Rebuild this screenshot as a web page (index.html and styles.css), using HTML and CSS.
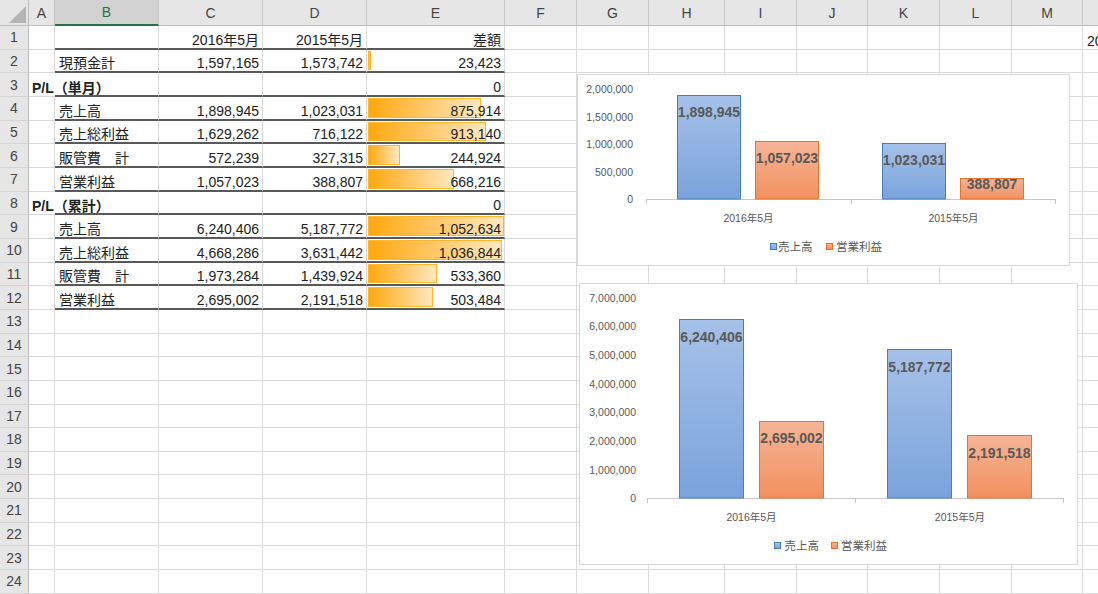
FILE: index.html
```html
<!DOCTYPE html>
<html lang="ja">
<head>
  <meta charset="UTF-8" />
  <title>P/L 比較</title>
  <link rel="stylesheet" href="styles.css">
</head>
<body>
  <div class="folha">
    <div class="planilha" id="planilha"></div>

    <!-- gráfico do mês -->
    <svg class="grafico g1" width="493" height="192" viewBox="0 0 493 192">
      <defs>
        <linearGradient id="azul" x1="0" y1="0" x2="0" y2="1">
          <stop offset="0" stop-color="#a6c1e8" />
          <stop offset="1" stop-color="#7aa3dc" />
        </linearGradient>
        <linearGradient id="laranja" x1="0" y1="0" x2="0" y2="1">
          <stop offset="0" stop-color="#f6b597" />
          <stop offset="1" stop-color="#f2905e" />
        </linearGradient>
      </defs>
      <rect class="moldura" x=".5" y=".5" width="492" height="191" />
      <g class="eixo-y">
        <text x="56" y="19">2,000,000</text>
        <text x="56" y="46.5">1,500,000</text>
        <text x="56" y="74">1,000,000</text>
        <text x="56" y="101.5">500,000</text>
        <text x="56" y="129">0</text>
      </g>
      <path class="eixo" d="M69 125.5H479M69.5 125v5M274.5 125v5M478.5 125v5" />
      <rect class="b-azul" x="100.5" y="21.5" width="63" height="103.5" />
      <rect class="b-laranja" x="178.5" y="67.5" width="63" height="57.5" />
      <rect class="b-azul" x="305.5" y="69.5" width="63" height="55.5" />
      <rect class="b-laranja" x="383.5" y="104.5" width="63" height="20.5" />
      <g class="rotulo">
        <text x="132" y="42.7">1,898,945</text>
        <text x="210" y="88.7">1,057,023</text>
        <text x="337" y="91">1,023,031</text>
        <text x="415" y="115.3">388,807</text>
      </g>
      <g class="categoria">
        <text x="171.5" y="147.5">2016年5月</text>
        <text x="376.5" y="147.5">2015年5月</text>
      </g>
      <g class="legenda">
        <rect class="b-azul" x="193.5" y="169.5" width="6" height="6" />
        <text x="201" y="176.8">売上高</text>
        <rect class="b-laranja" x="249.5" y="169.5" width="6" height="6" />
        <text x="259" y="176.8">営業利益</text>
      </g>
    </svg>

    <!-- gráfico acumulado -->
    <svg class="grafico g2" width="499" height="282" viewBox="0 0 499 282">
      <rect class="moldura" x=".5" y=".5" width="498" height="281" />
      <g class="eixo-y">
        <text x="57" y="18.6">7,000,000</text>
        <text x="57" y="47.3">6,000,000</text>
        <text x="57" y="76">5,000,000</text>
        <text x="57" y="104.6">4,000,000</text>
        <text x="57" y="133.3">3,000,000</text>
        <text x="57" y="162">2,000,000</text>
        <text x="57" y="190.6">1,000,000</text>
        <text x="57" y="219.3">0</text>
      </g>
      <path class="eixo" d="M68 215.5H485M68.5 215v5M276.5 215v5M484.5 215v5" />
      <rect class="b-azul" x="100.5" y="36.5" width="64" height="178.5" />
      <rect class="b-laranja" x="180.5" y="138.5" width="64" height="76.5" />
      <rect class="b-azul" x="308.5" y="66.5" width="64" height="148.5" />
      <rect class="b-laranja" x="388.5" y="152.5" width="64" height="62.5" />
      <g class="rotulo">
        <text x="132.5" y="58.6">6,240,406</text>
        <text x="212.5" y="160.2">2,695,002</text>
        <text x="340.5" y="88.8">5,187,772</text>
        <text x="420.5" y="174.7">2,191,518</text>
      </g>
      <g class="categoria">
        <text x="172.5" y="237.7">2016年5月</text>
        <text x="380.9" y="237.7">2015年5月</text>
      </g>
      <g class="legenda">
        <rect class="b-azul" x="195.5" y="259.5" width="6" height="6" />
        <text x="205.5" y="266.8">売上高</text>
        <rect class="b-laranja" x="252.5" y="259.5" width="6" height="6" />
        <text x="262" y="266.8">営業利益</text>
      </g>
    </svg>
  </div>

  <script>
    const colunas = ['a', 'b', 'c', 'd', 'e', 'f', 'g', 'h', 'i', 'j', 'k', 'l', 'm', 'n'];
    const maiorDif = 1052634;
    const larguraBarra = 136;
    const fmt = n => n.toLocaleString('en-US');

    const linhas = [
      { c: '2016年5月', d: '2015年5月', e: '差額', n: '2016年5月' },
      { b: '現預金計', c: 1597165, d: 1573742, e: 23423 },
      { a: 'P/L（単月）', e: 0 },
      { b: '売上高', c: 1898945, d: 1023031, e: 875914 },
      { b: '売上総利益', c: 1629262, d: 716122, e: 913140 },
      { b: '販管費　計', c: 572239, d: 327315, e: 244924 },
      { b: '営業利益', c: 1057023, d: 388807, e: 668216 },
      { a: 'P/L（累計）', e: 0 },
      { b: '売上高', c: 6240406, d: 5187772, e: 1052634 },
      { b: '売上総利益', c: 4668286, d: 3631442, e: 1036844 },
      { b: '販管費　計', c: 1973284, d: 1439924, e: 533360 },
      { b: '営業利益', c: 2695002, d: 2191518, e: 503484 }
    ];

    const planilha = document.getElementById('planilha');

    function celula(classe, texto) {
      const el = document.createElement('div');
      el.className = classe;
      if (texto !== undefined) el.textContent = texto;
      planilha.appendChild(el);
      return el;
    }

    celula('canto');
    colunas.forEach(c => celula(c === 'b' ? 'cab-col ativo' : 'cab-col', c.toUpperCase()));

    for (let r = 1; r <= 24; r++) {
      celula('cab-lin', r);
      const dados = linhas[r - 1] || {};

      colunas.forEach(c => {
        const valor = dados[c];
        let classe = 'cel';
        if (r <= 12 && 'bcde'.includes(c)) classe += ' linha';

        if (valor === undefined) return celula(classe);
        if (c === 'a') return celula(classe + ' titulo', valor);
        if (c === 'b' || c === 'n') return celula(classe, valor);
        if (typeof valor === 'string') return celula(classe + ' num', valor);

        if (c === 'e' && valor > 0) {
          const el = celula(classe + ' dif');
          const w = (valor / maiorDif * larguraBarra).toFixed(1);
          el.innerHTML = `<span class="barra" style="width:${w}px"></span><span class="valor">${fmt(valor)}</span>`;
          return el;
        }
        return celula(classe + ' num', fmt(valor));
      });
    }
  </script>
</body>
</html>
```

FILE: styles.css
```css
* { margin: 0; padding: 0; box-sizing: border-box; }

body {
  font-family: 'Liberation Sans', 'Noto Sans CJK JP', sans-serif;
  font-size: 14px;
  color: #222;
  background: #fff;
  overflow: hidden;
}

.folha {
  position: relative;
  width: 1098px;
  height: 594px;
  overflow: hidden;
}

.planilha {
  display: grid;
  grid-template-columns: 29px 26px 104px 104px 104px 138px 72px 72px 76px 72px 71px 72px 72px 71px 72px;
  grid-template-rows: 26px repeat(24, 23.67px);
}

/* cabeçalhos */
.canto {
  background: #e6e6e6;
  border-right: 1px solid #bdbdbd;
  border-bottom: 1px solid #bdbdbd;
  display: flex;
  align-items: flex-end;
  justify-content: flex-end;
  padding: 0 2px 2px 0;
}

.canto::after {
  content: '';
  border-left: 17px solid transparent;
  border-bottom: 17px solid #b4b4b4;
}

.cab-col {
  background: #e6e6e6;
  border-right: 1px solid #c8c8c8;
  border-bottom: 1px solid #bdbdbd;
  display: flex;
  align-items: center;
  justify-content: center;
  color: #444;
}

.cab-col.ativo {
  background: #d2d2d2;
  color: #217346;
  border-bottom: 2px solid #217346;
}

.cab-lin {
  background: #e6e6e6;
  border-right: 1px solid #bdbdbd;
  border-bottom: 1px solid #d4d4d4;
  display: flex;
  align-items: center;
  justify-content: center;
  color: #444;
}

/* células */
.cel {
  display: flex;
  align-items: flex-end;
  padding: 0 3px 0 4px;
  border-right: 1px solid #dadada;
  border-bottom: 1px solid #dadada;
  line-height: 16px;
  white-space: nowrap;
  min-width: 0;
}

.cel.linha {
  border-bottom: 2px solid #595959;
}

.num {
  justify-content: flex-end;
}

.titulo {
  font-weight: bold;
  border-right: none;
  padding-left: 3px;
}

.dif {
  display: grid;
  grid-template: 1fr / 1fr;
  padding: 0;
}

.dif > * {
  grid-area: 1 / 1;
}

.barra {
  justify-self: start;
  align-self: stretch;
  margin: 1px 0 1px 1px;
  border: 1px solid #ffb628;
  background: linear-gradient(to right, #ffa80f, #ffe8bf);
}

.valor {
  justify-self: end;
  align-self: end;
  padding-right: 3px;
}

/* gráficos */
.grafico {
  position: absolute;
  font-family: 'Liberation Sans', 'Noto Sans CJK JP', sans-serif;
}

.g1 { left: 577px; top: 74px; }
.g2 { left: 579px; top: 283px; }

.moldura {
  fill: #fff;
  stroke: #d9d9d9;
}

.eixo {
  fill: none;
  stroke: #c9c9c9;
}

.eixo-y text {
  text-anchor: end;
  font-size: 10.5px;
  fill: #595959;
}

.categoria text {
  text-anchor: middle;
  font-size: 10.5px;
  fill: #595959;
}

.legenda text {
  font-size: 11.5px;
  fill: #595959;
}

.rotulo text {
  text-anchor: middle;
  font-size: 14px;
  font-weight: bold;
  fill: #595959;
}

.b-azul {
  fill: url(#azul);
  stroke: #4a7ebb;
}

.b-laranja {
  fill: url(#laranja);
  stroke: #e8712c;
}
```
